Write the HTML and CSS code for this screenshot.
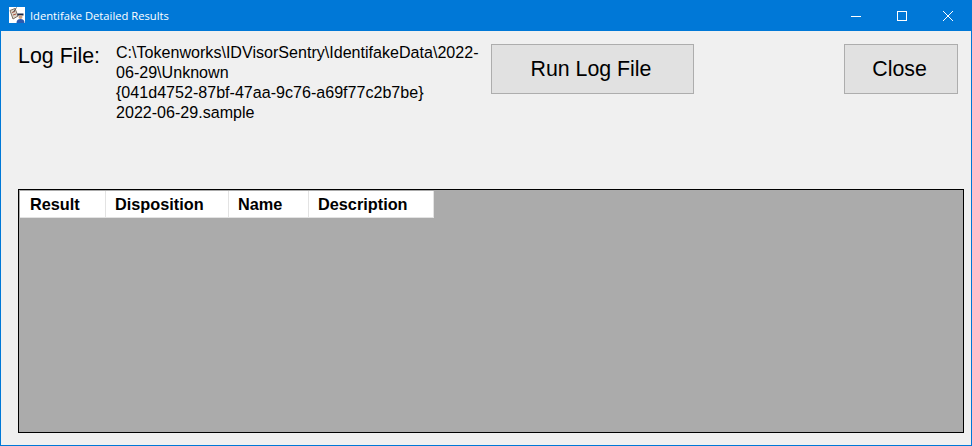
FILE: index.html
```html
<!DOCTYPE html>
<html lang="en">
<head>
<meta charset="utf-8">
<title>Identifake Detailed Results</title>
<link rel="stylesheet" href="styles.css">
</head>
<body>
<div class="window">
  <header class="titlebar">
    <svg class="app-icon" width="16" height="16" viewBox="0 0 16 16">
      <rect width="16" height="16" fill="#fff"/>
      <path d="M1 3.5 L6 1.5 L9 9 L4 12 Z" fill="#dcd6ca" stroke="#7b6f64" stroke-width="1"/>
      <path d="M3 5.5 L6 4.5 M4 8 L7 7" stroke="#a5503f" stroke-width="1"/>
      <path d="M7.5 .5 L4.5 5" stroke="#555" stroke-width="1"/>
      <rect x="8.5" y="6.5" width="6" height="2" fill="#1d2a48"/>
      <circle cx="11.5" cy="10" r="2" fill="#c9a184"/>
      <path d="M7.5 16 Q7.5 12 11.5 12 Q15.5 12 15.5 16 Z" fill="#2a59b0"/>
    </svg>
    <span class="title">Identifake Detailed Results</span>
    <div class="controls">
      <span class="ctl"><svg width="10" height="10" viewBox="0 0 10 10"><path d="M0 5.5H10" stroke="#fff" stroke-width="1"/></svg></span>
      <span class="ctl"><svg width="10" height="10" viewBox="0 0 10 10"><rect x=".5" y=".5" width="9" height="9" fill="none" stroke="#fff" stroke-width="1"/></svg></span>
      <span class="ctl"><svg width="10" height="10" viewBox="0 0 10 10"><path d="M0 0L10 10M10 0L0 10" stroke="#fff" stroke-width="1"/></svg></span>
    </div>
  </header>
  <main class="content">
    <section class="top">
      <div class="log-label">Log File:</div>
      <div class="log-path">C:\Tokenworks\IDVisorSentry\IdentifakeData\2022-06-29\Unknown<br>{041d4752-87bf-47aa-9c76-a69f77c2b7be}<br>2022-06-29.sample</div>
      <button class="btn btn-run">Run Log File</button>
      <button class="btn btn-close">Close</button>
    </section>
    <section class="grid">
      <div class="grid-head">
        <div class="col col-result">Result</div>
        <div class="col col-disp">Disposition</div>
        <div class="col col-name">Name</div>
        <div class="col col-desc">Description</div>
      </div>
    </section>
  </main>
</div>
</body>
</html>
```
FILE: styles.css
```css
* { box-sizing: border-box; }
html, body { margin: 0; height: 100%; }
body { font-family: "Liberation Sans", Arial, sans-serif; color: #000; overflow: hidden; }
.window {
  width: 972px; height: 446px;
  display: flex; flex-direction: column;
  background: #f0f0f0;
  border: 1px solid #0078d7;
  border-top: 0;
}
.titlebar {
  height: 31px; flex: none;
  margin: 0 -1px;
  background: #0078d7; color: #fff;
  display: flex; align-items: center;
  padding: 0 1px 0 9px;
}
.app-icon { display: block; margin: -1px 5px 0 0; }
.title { font: 11.2px/16px "Open Sans", "Noto Sans", sans-serif; }
.controls { margin-left: auto; display: flex; }
.ctl { width: 46px; height: 31px; display: flex; align-items: center; justify-content: center; }
.ctl svg { display: block; }
.content { flex: 1; display: flex; flex-direction: column; padding: 13px 7px 12px 17px; }
.top { display: flex; align-items: flex-start; height: 145px; flex: none; }
.log-label { width: 98px; font-size: 21.4px; line-height: 24px; }
.log-path { width: 375px; font-size: 16.08px; line-height: 20px; margin-top: -2px; }
.btn {
  background: #e1e1e1; border: 1px solid #adadad; color: #000;
  font-family: "Liberation Sans", Arial, sans-serif; font-size: 21.33px;
  height: 50px; padding: 1px 3px 0 0;
}
.btn-run { width: 203px; }
.btn-close { width: 114px; margin-left: 150px; }
.grid { flex: 1; background: #ababab; border: 1px solid #000; padding: 1px; }
.grid-head { display: flex; height: 27px; width: 414px; background: #fff; border-bottom: 1px solid #e3e3e3; }
.col { font-size: 16.3px; font-weight: bold; line-height: 27px; padding-left: 9px; border-right: 1px solid #e3e3e3; }
.col-result { width: 86px; padding-left: 10px; }
.col-disp { width: 123px; }
.col-name { width: 80px; }
.col-desc { width: 125px; }
```
